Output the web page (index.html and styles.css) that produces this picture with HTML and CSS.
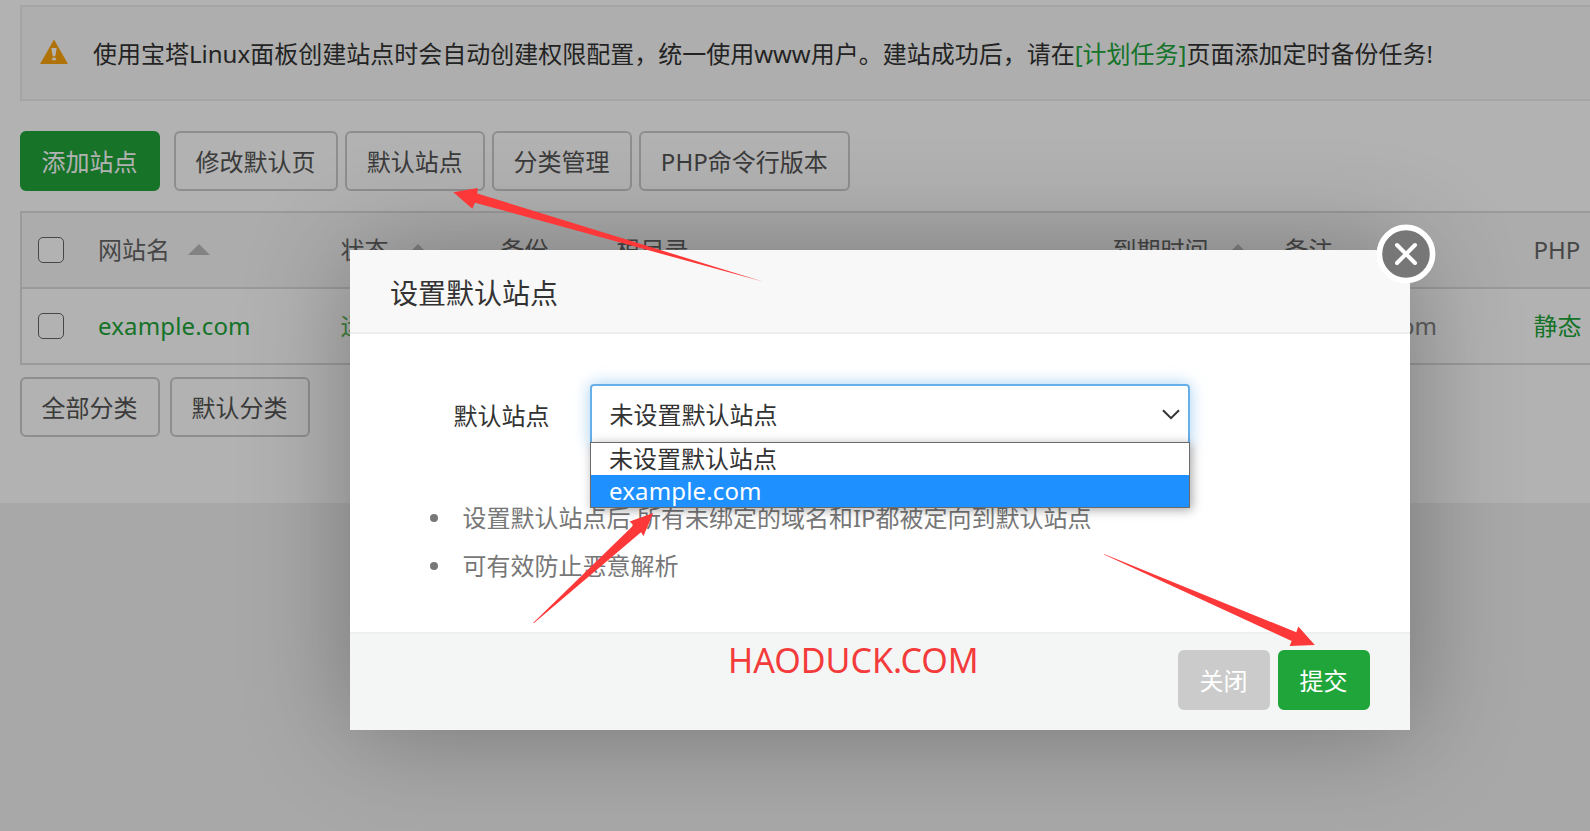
FILE: index.html
```html
<!DOCTYPE html>
<html lang="zh-CN">
<head>
<meta charset="utf-8">
<title>设置默认站点</title>
<link rel="stylesheet" href="styles.css">
</head>
<body>
<main class="page">
  <div class="notice">
    <svg class="warn" viewBox="0 0 28 25"><path fill="#fca50e" d="M14 0.5 28 25H0z"/><path fill="#fff" d="M11.3 9h5.4l-1.4 8.2h-2.6zM12.2 18.8h3.6v2.4h-3.6z"/></svg>
    <p class="notice-text">使用宝塔Linux面板创建站点时会自动创建权限配置，统一使用www用户。建站成功后，请在<a class="link">[计划任务]</a>页面添加定时备份任务!</p>
  </div>
  <div class="toolbar">
    <button class="btn primary">添加站点</button>
    <button class="btn">修改默认页</button>
    <button class="btn">默认站点</button>
    <button class="btn">分类管理</button>
    <button class="btn wide">PHP命令行版本</button>
  </div>
  <div class="table">
    <div class="row head">
      <span class="check"></span>
      <span class="sortable">网站名<i class="caret"></i></span>
      <span class="sortable">状态<i class="caret"></i></span>
      <span>备份</span>
      <span>根目录</span>
      <span class="sortable">到期时间<i class="caret"></i></span>
      <span>备注</span>
      <span>PHP</span>
    </div>
    <div class="row">
      <span class="check"></span>
      <span class="link domain">example.com</span>
      <span class="running">运行中</span>
      <span></span>
      <span></span>
      <span></span>
      <span class="remark domain">example.com</span>
      <span class="link">静态</span>
    </div>
  </div>
  <div class="tags">
    <button class="btn">全部分类</button>
    <button class="btn">默认分类</button>
  </div>
</main>
<div class="shade"></div>
<section class="modal">
  <header class="modal-head">设置默认站点</header>
  <div class="modal-body">
    <div class="field">
      <label class="label">默认站点</label>
      <div class="select">
        <span>未设置默认站点</span>
        <svg class="chevron" viewBox="0 0 18 11"><path d="M1 1.2 9 9.2 17 1.2" fill="none" stroke="#333" stroke-width="2"/></svg>
        <div class="options">
          <div class="option">未设置默认站点</div>
          <div class="option active domain">example.com</div>
        </div>
      </div>
    </div>
    <ul class="tips">
      <li>设置默认站点后,所有未绑定的域名和IP都被定向到默认站点</li>
      <li>可有效防止恶意解析</li>
    </ul>
  </div>
  <footer class="modal-foot">
    <span class="brand">HAODUCK.COM</span>
    <button class="btn cancel">关闭</button>
    <button class="btn primary">提交</button>
  </footer>
  <svg class="close" viewBox="0 0 60 60"><circle cx="30" cy="30" r="26.6" fill="#777" stroke="#fff" stroke-width="5.6"/><path d="M21 21 39 39M39 21 21 39" stroke="#fff" stroke-width="4" stroke-linecap="round"/></svg>
</section>
<svg class="arrows" viewBox="0 0 1590 831">
  <path d="M453.3 192.3 477.8 188 477.2 193.5 763.5 281.8 475 202.7 472.3 208.8z"/>
  <path d="M653.3 513 629.7 521.5 633.5 525.3 533 623 534 623 641 532.3 643.5 536z"/>
  <path d="M1314.8 645 1298.3 626.5 1296.3 632.3 1104 554 1104 554.6 1291.7 641 1289.6 646z"/>
</svg>
</body>
</html>
```
FILE: styles.css
```css
* { box-sizing: border-box; }
body {
  position: relative;
  margin: 0;
  width: 1590px;
  height: 831px;
  overflow: hidden;
  background: #f1f1f1;
  color: #333;
  font: 24px/34px "Noto Sans", "Noto Sans CJK SC", sans-serif;
  white-space: nowrap;
}
p, ul { margin: 0; padding: 0; }
.page { height: 503px; padding: 5px 0 0 20px; background: #fff; overflow: hidden; }
.notice {
  display: flex;
  align-items: center;
  gap: 25px;
  width: 1600px;
  height: 96px;
  padding-left: 18px;
  background: #fafafa;
  border: 2px solid #ededed;
}
.warn { width: 28px; height: 25px; margin-top: -3px; }
.notice-text { padding-top: 1px; }
.link { color: #20a53a; }
.domain { letter-spacing: .15px; }
.toolbar { display: flex; gap: 7.3px; margin-top: 30px; }
.btn {
  height: 60px;
  padding: 1px 20px 0 19px;
  border: 2px solid #ccc;
  border-radius: 6px;
  background: transparent;
  color: #555;
  font: inherit;
  width: 140px;
}
.btn.primary { background: #20a53a; border-color: #20a53a; color: #fff; }
.toolbar .primary { margin-right: 6.7px; }
.toolbar .btn:nth-child(2) { width: 164px; }
.toolbar .btn:nth-child(3) { margin-right: -.6px; }
.btn.wide { width: 211px; }
.table { width: 1600px; margin-top: 20px; border: 2px solid #ddd; }
.row {
  display: grid;
  grid-template-columns: 60px 242.5px 160px 116px 496px 172px 249px 1fr;
  align-items: center;
  height: 74px;
  padding-left: 16px;
}
.row.head { height: 76px; background: #f6f6f6; border-bottom: 2px solid #ddd; color: #666; }
.check { width: 26px; height: 26px; border: 1.5px solid #666; border-radius: 5px; background: #fff; }
.sortable { display: flex; align-items: center; }
.caret { margin-left: 18px; margin-top: -2px; border: 11.5px solid transparent; border-top: 0; border-bottom-color: #bbb; }
.running { color: #5cb85c; }
.remark { color: #888; }
.tags { display: flex; gap: 10px; margin-top: 12px; }
.shade { position: absolute; inset: 0; background: rgba(0, 0, 0, .3); }
.modal {
  position: absolute;
  left: 350px;
  top: 250px;
  display: flex;
  flex-direction: column;
  width: 1060px;
  height: 480px;
  background: #fff;
  box-shadow: 2px 2px 100px rgba(0, 0, 0, .3);
}
.modal-head {
  height: 84px;
  padding-left: 40px;
  background: #f8f8f8;
  border-bottom: 2px solid #eee;
  font-size: 28px;
  line-height: 86px;
}
.modal-body { flex: 1; padding: 50px 40px 0; }
.field { display: flex; align-items: center; }
.label { width: 200px; padding: 3px 0 0 63.5px; }
.select {
  position: relative;
  display: flex;
  align-items: center;
  justify-content: space-between;
  width: 600px;
  height: 61px;
  padding: 0 8px 0 17.5px;
  border: 2px solid #66afe9;
  border-radius: 4px;
  box-shadow: 0 0 16px rgba(102, 175, 233, .6);
}
.chevron { width: 18px; height: 11px; }
.options {
  position: absolute;
  left: -2px;
  top: 56px;
  width: 600px;
  background: #fff;
  border: 1px solid #6b6b6b;
  box-shadow: 2px 2px 10px rgba(0, 0, 0, .35);
}
.option { height: 32px; padding-left: 18px; line-height: 32px; }
.option.active { background: #1e90ff; color: #fff; line-height: 31px; }
.tips { margin-top: 49px; padding-left: 40px; color: #777; line-height: 48px; list-style: none; }
.tips li { display: flex; align-items: center; gap: 24.5px; }
.tips li::before { content: ""; width: 8px; height: 8px; border-radius: 50%; background: #777; }
.modal-foot {
  display: flex;
  align-items: center;
  gap: 8px;
  height: 98px;
  padding: 0 40px 4px 378px;
  background: #f4f6f6;
  border-top: 2px solid #edf0f0;
}
.modal-foot .btn { width: 92px; }
.brand { margin: -40px auto 0 0; color: #f33b3b; font-size: 34px; }
.btn.cancel { background: #cbcbcb; border-color: #cbcbcb; color: #fff; }
.close { position: absolute; left: 1026px; top: -26px; width: 60px; height: 60px; }
.arrows { position: absolute; inset: 0; width: 1590px; height: 831px; fill: #fd3838; }
```
